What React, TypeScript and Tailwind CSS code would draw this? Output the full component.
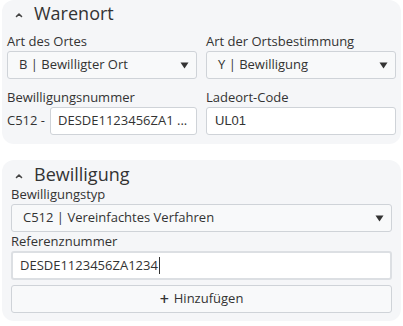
import React from "react";

const font = { fontFamily: '"Open Sans", "Liberation Sans", sans-serif' };

function Chevron() {
  return (
    <svg width="10" height="10" viewBox="0 0 10 10" className="mr-[10px] mt-[3px]">
      <path d="M2.5 6.5 L5 4 L7.5 6.5" fill="none" stroke="#444" strokeWidth="1.6" strokeLinecap="round" strokeLinejoin="round" />
    </svg>
  );
}

function Caret() {
  return (
    <svg width="9" height="7" viewBox="0 0 9 7">
      <path d="M0.5 0.5 H8.5 L4.5 6.5 Z" fill="#333" />
    </svg>
  );
}

function Select({ value }: { value: string }) {
  return (
    <div className="flex h-[28px] items-center justify-between rounded-[3px] border border-[#cfd3d8] bg-[#f8f9fa] pl-[11px] pr-[7px] text-[13px] text-[#333]">
      <span>{value}</span>
      <Caret />
    </div>
  );
}

function Label({ children }: { children: React.ReactNode }) {
  return <div className="mb-[1px] text-[13px] leading-[18px] text-[#333]">{children}</div>;
}

export default function App() {
  return (
    <div className="h-[326px] w-[403px] bg-white" style={font}>
      {/* Warenort */}
      <div className="mx-[2px] rounded-[12px] bg-[#f5f6f8] px-[5px] pb-[9px] pt-0">
        <div className="flex items-center pl-[7px] text-[18px] leading-[26px] text-[#333]">
          <Chevron />
          <span>Warenort</span>
        </div>
        <div className="mt-[6px] grid grid-cols-2 gap-x-[9px]">
          <div>
            <Label>Art des Ortes</Label>
            <Select value="B | Bewilligter Ort" />
          </div>
          <div>
            <Label>Art der Ortsbestimmung</Label>
            <Select value="Y | Bewilligung" />
          </div>
        </div>
        <div className="mt-[9px] grid grid-cols-2 gap-x-[9px]">
          <div>
            <Label>Bewilligungsnummer</Label>
            <div className="flex items-center">
              <span className="mr-[5px] text-[13px] text-[#333]">C512 -</span>
              <div className="flex h-[28px] min-w-0 flex-1 items-center rounded-[3px] border border-[#cfd3d8] bg-white pl-[7px] text-[13px] text-[#333]">
                <span className="truncate">DESDE1123456ZA1 ...</span>
              </div>
            </div>
          </div>
          <div>
            <Label>Ladeort-Code</Label>
            <div
              className="flex h-[28px] items-center rounded-[3px] border border-[#cfd3d8] bg-white pl-[8px] text-[13px] text-[#333]"
              style={{ fontFamily: '"Liberation Sans", Arial, sans-serif' }}
            >
              UL01
            </div>
          </div>
        </div>
      </div>

      {/* Bewilligung */}
      <div className="mx-[2px] mt-[16px] rounded-[12px] bg-[#f5f6f8] px-[9px] pb-[8px] pt-[1px]">
        <div className="flex items-center pl-[3px] text-[18px] leading-[26px] text-[#333]">
          <Chevron />
          <span>Bewilligung</span>
        </div>
        <div className="mt-[-2px]">
          <Label>Bewilligungstyp</Label>
          <Select value="C512 | Vereinfachtes Verfahren" />
        </div>
        <div className="mt-0">
          <Label>Referenznummer</Label>
          <div className="flex h-[29px] items-center rounded-[3px] border-2 border-[#dcdfe3] bg-white pl-[7px] text-[13px] text-[#333]">
            <span>DESDE1123456ZA1234</span>
            <span className="ml-[1px] h-[17px] w-[1px] bg-[#333]" />
          </div>
        </div>
        <button className="mt-[5px] flex h-[28px] w-full items-center justify-center rounded-[3px] border border-[#cfd3d8] bg-[#f8f9fa] text-[13px] text-[#333]">
          <span className="mr-[5px] text-[16px] leading-none font-semibold">+</span>
          Hinzufügen
        </button>
      </div>
    </div>
  );
}
